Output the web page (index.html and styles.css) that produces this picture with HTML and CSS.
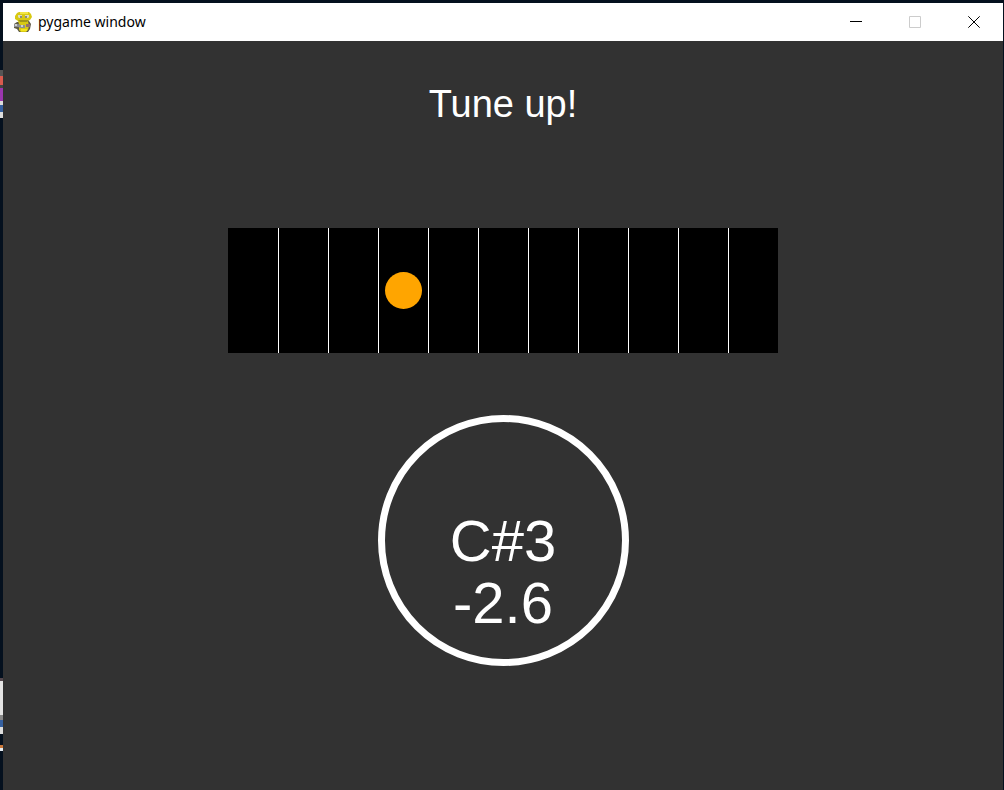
FILE: index.html
```
<!DOCTYPE html>
<html lang="en">
<head>
    <meta charset="UTF-8">
    <meta name="viewport" content="width=device-width, initial-scale=1.0">
    <title>pygame window</title>
    <link rel="stylesheet" href="styles.css">
</head>
<body>
    <div class="desktop"></div>
    <div class="window">
        <header class="titlebar">
            <svg class="app-icon" viewBox="0 0 20 20" aria-hidden="true">
                <path d="M4 10 L1 12 V16 L4 17 L6 20 H15 L17 17 L18 12 L16 9 Z" fill="#5f5b45"/>
                <path d="M6 0 H16 L18 2 L19 5 L17 8 L15 9 L16 14 L15 18 L13 20 H8 L6 18 V12 L5 9 L2 7 V4 L4 1 Z" fill="#d8c913"/>
                <path d="M7 0 H15 V2 H7 Z" fill="#f2e544"/>
                <path d="M5 8 H16 L14 10 H7 Z" fill="#a0961a"/>
                <path d="M5 3 H9 V6 H6 L5 5 Z M12 3 H16 V5 L15 6 H12 Z" fill="#dcdcc4"/>
                <path d="M7 4 H9 V6 H7 Z M12 4 H14 V6 H12 Z" fill="#8a8a80"/>
                <path d="M1 12 H5 L8 13 H12 V16 H8 L5 15 H1 Z" fill="#8d8f92"/>
                <path d="M2 12 H4 V14 H2 Z M8 13 H10 V15 H8 Z" fill="#d0d0d0"/>
                <path d="M13 12 H17 V15 H13 Z" fill="#94716a"/>
                <path d="M8 17 H14 V19 H8 Z" fill="#f4e51e"/>
            </svg>
            <span class="title">pygame window</span>
            <div class="controls">
                <button type="button" class="control" aria-label="Minimize">
                    <svg viewBox="0 0 12 12"><path d="M0 5.5 H12"/></svg>
                </button>
                <button type="button" class="control" aria-label="Maximize" disabled>
                    <svg viewBox="0 0 12 12"><path d="M0.5 0.5 H11.5 V11.5 H0.5 Z"/></svg>
                </button>
                <button type="button" class="control" aria-label="Close">
                    <svg viewBox="0 0 12 12"><path d="M0.3 0.3 L11.7 11.7 M11.7 0.3 L0.3 11.7"/></svg>
                </button>
            </div>
        </header>

        <main class="tuner">
            <h1 class="message">Tune up!</h1>

            <div class="scale">
                <div class="cell"></div>
                <div class="cell"></div>
                <div class="cell"></div>
                <div class="cell"><div class="marker"></div></div>
                <div class="cell"></div>
                <div class="cell"></div>
                <div class="cell"></div>
                <div class="cell"></div>
                <div class="cell"></div>
                <div class="cell"></div>
                <div class="cell"></div>
            </div>

            <div class="dial">
                <div class="note">C#3</div>
                <div class="cents">-2.6</div>
            </div>
        </main>
    </div>
</body>
</html>
```
FILE: styles.css
```
* { box-sizing: border-box; }
body { display: flex; min-height: 100vh; margin: 0; padding: 3px 1px 0 0; background: #04101e; font-family: "Liberation Sans", Arial, sans-serif; }

/* strip of the desktop left of the window */
.desktop {
    width: 3px;
    background: linear-gradient(
        #04101e 67px, #555 67px 73px, #d95a4e 73px 82px, #444 82px 85px,
        #9b36ae 85px 98px, #ddd 98px 102px, #3560a0 102px 109px, #ddd 109px 115px,
        #04101e 115px 675px, #54474d 675px 678px, #e4e4e4 678px 712px, #888 712px 717px,
        #3560a0 717px 724px, #ddd 724px 731px, #04101e 731px 742px, #c8773a 742px 745px,
        #e6eef5 745px 748px, #04101e 748px
    );
}
.window { flex: 1; display: flex; flex-direction: column; background: #323232; }

.titlebar { display: flex; align-items: center; height: 38px; padding-left: 10px; background: #fff; }
.app-icon { width: 20px; height: 20px; }
.title { margin-left: 5px; font-family: "Segoe UI", "Noto Sans", sans-serif; font-size: 14px; line-height: 20px; color: #000; }
.controls { display: flex; align-self: stretch; margin-left: auto; }
.control { display: flex; align-items: center; justify-content: center; width: 59px; padding: 0; border: 0; background: none; color: #000; }
.control:disabled { color: #ccc; }
.control svg { width: 12px; height: 12px; fill: none; stroke: currentColor; }

.tuner { display: flex; flex-direction: column; align-items: center; padding-top: 38px; color: #fff; }
.message { margin: 0; font-size: 38px; line-height: 50px; font-weight: normal; }

.scale { display: grid; grid-template-columns: repeat(11, 1fr); width: 55%; height: 125px; margin-top: 99px; background: #000; }
.cell { display: flex; align-items: center; justify-content: center; }
.cell + .cell { border-left: 1px solid #fff; }
.marker { width: 37px; height: 37px; border-radius: 50%; background: #ffa500; }

.dial { display: flex; flex-direction: column; align-items: center; width: 251px; height: 251px; margin-top: 62px; padding-top: 88px; border: 7px solid #fff; border-radius: 50%; font-size: 58px; line-height: 62px; }
```
